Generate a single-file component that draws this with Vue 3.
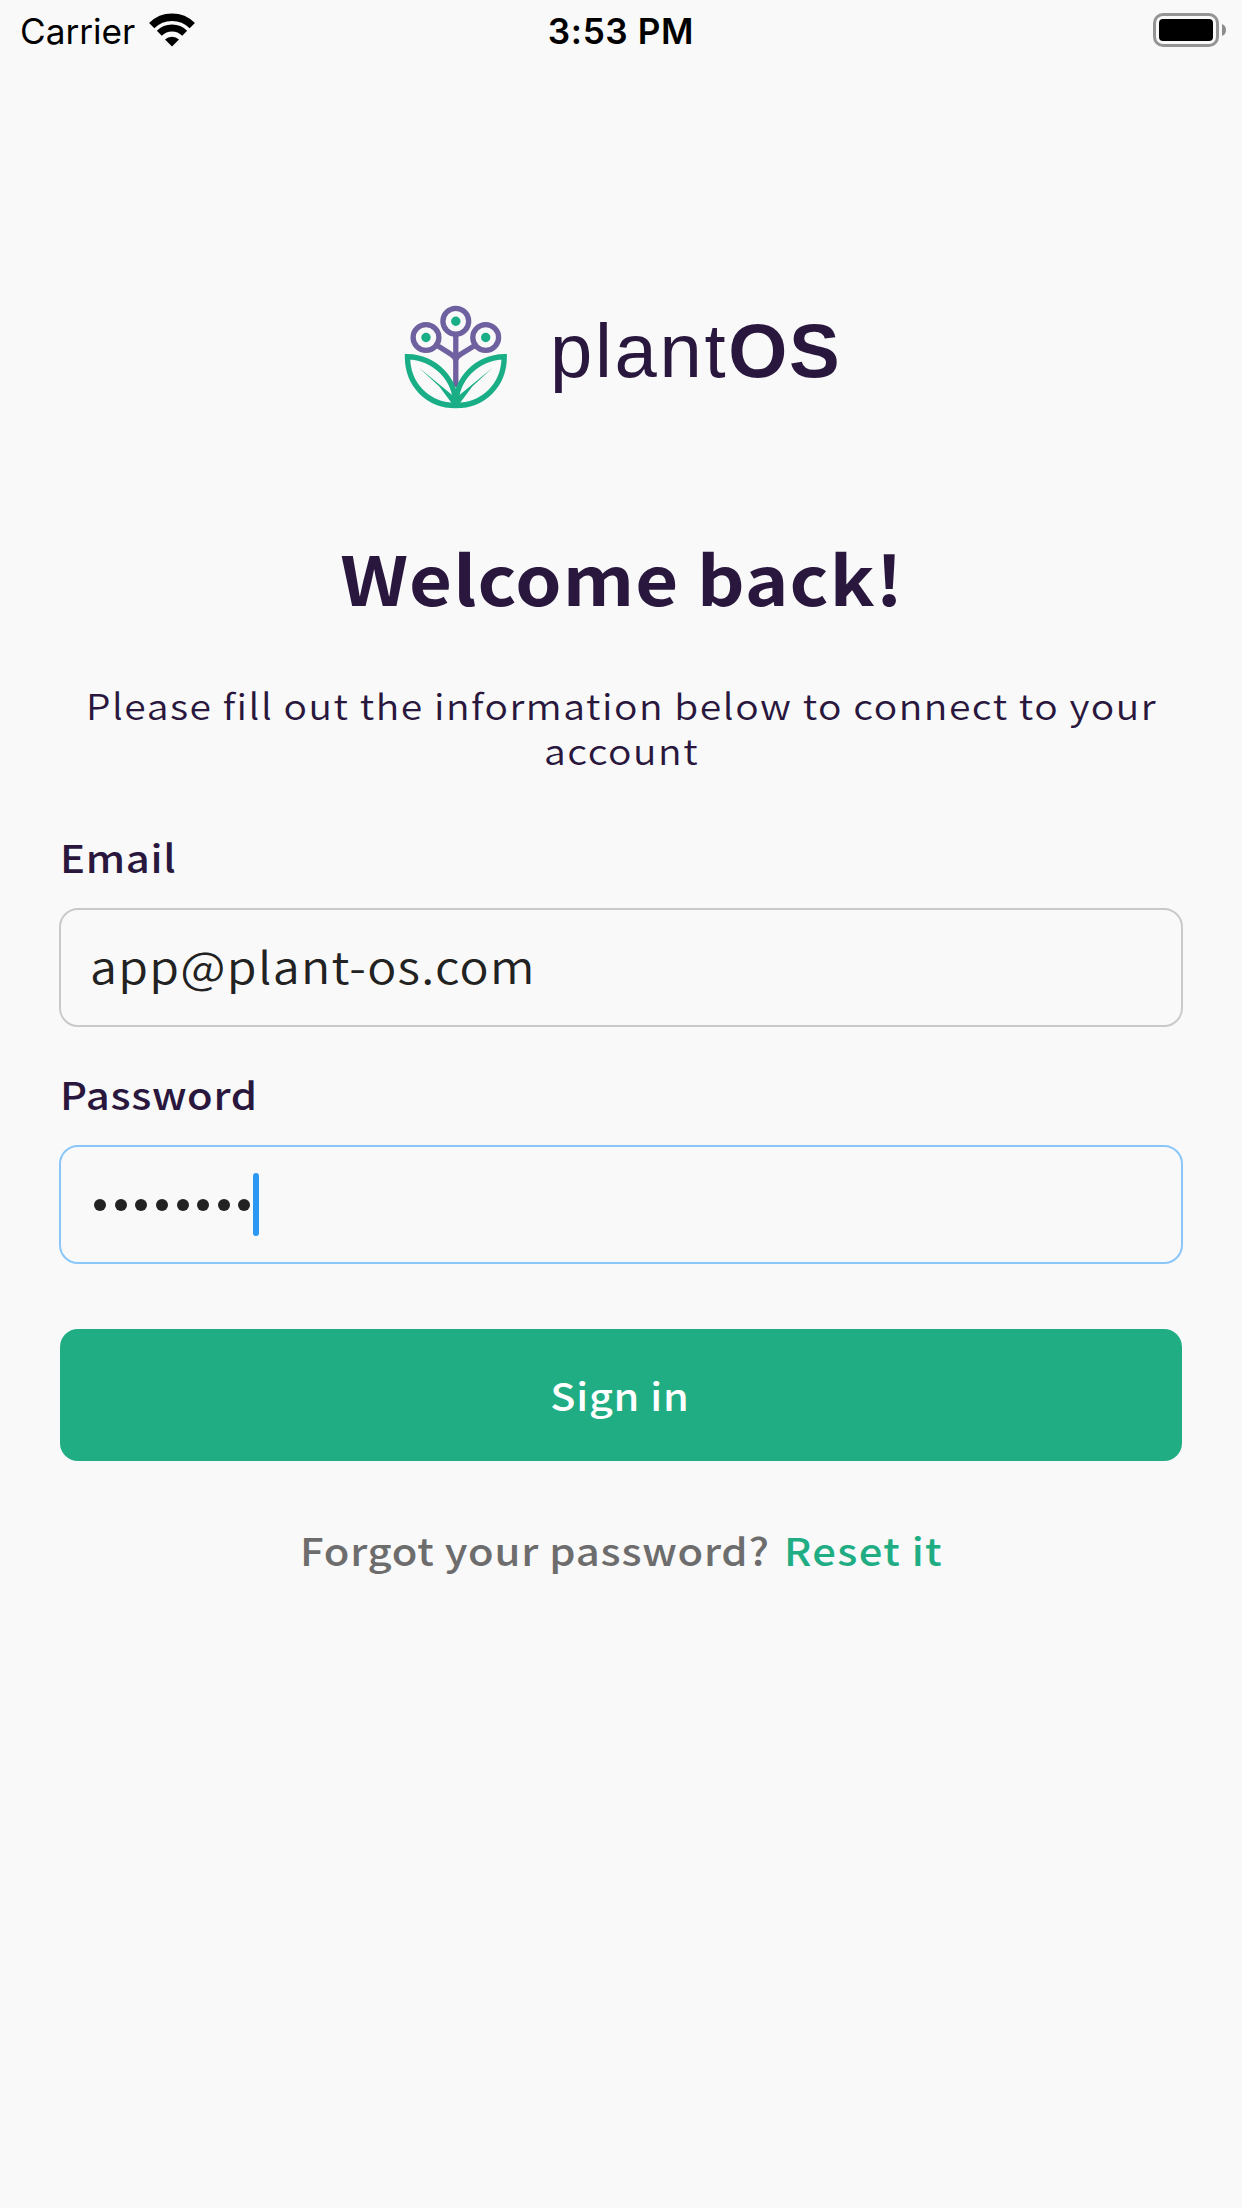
<script setup>
const dots = 8
</script>

<template>
  <main class="screen">
    <header class="status">
      <div class="carrier"><span>Carrier</span>
        <svg width="48" height="35" viewBox="0 0 48 35"><g fill="none" stroke="#000"><path d="M3.7 12.7a28.7 28.7 0 0 1 40.6 0" stroke-width="7.4"/><path d="M11.3 20.3a18 18 0 0 1 25.4 0" stroke-width="7"/></g><path d="M24 33.500l-7-7a10 10 0 0 1 14 0z"/></svg>
      </div>
      <time>3:53 PM</time>
      <div class="battery"><i class="case"><b></b></i>
        <svg width="4" height="12" viewBox="0 0 4 12"><path d="M0 0a6.5 6.5 0 0 1 0 12z" fill="#8c8c8c"/></svg>
      </div>
    </header>
    <div class="brand">
      <svg width="104" height="104" viewBox="9 10 104 104" fill="none">
        <g stroke="#6f60a0" stroke-width="5.300"><path d="M60.8 41v51M43 51l13 8.300q4.800 2.400 4.800 7 0-4.600 4.800-7L79 51"/><circle cx="60.800" cy="26.300" r="12.900"/><circle cx="31" cy="42.500" r="12.900"/><circle cx="90.700" cy="42.500" r="12.900"/></g>
        <g fill="#19ae85"><circle cx="60.800" cy="26.300" r="4.700"/><circle cx="31" cy="42.500" r="4.700"/><circle cx="90.700" cy="42.500" r="4.700"/><path d="M24 72.700 60.800 103 97.600 72.700 77.300 91.500 65 108H56.600L44.300 91.500z"/></g>
        <path d="M12.500 61.800C12.500 90 33 110.500 60.800 110.500 60.800 84 40 62.500 12.500 61.800zM109.200 61.800C109.200 90 88.600 110.500 60.800 110.500 60.800 84 81.600 62.500 109.200 61.800z" stroke="#19ae85" stroke-width="5.400"/>
      </svg>
      <div class="word">plant<strong>OS</strong></div>
    </div>
    <h1>Welcome back!</h1>
    <p class="intro">Please fill out the information below to connect to your<br>account</p>
    <label>Email</label>
    <div class="field"><span class="value">app@plant-os.com</span></div>
    <label>Password</label>
    <div class="field focus"><i v-for="n in dots" :key="n" class="dot"></i><i class="caret"></i></div>
    <button><span>Sign in</span></button>
    <p class="reset"><span>Forgot your password?</span><a>Reset it</a></p>
  </main>
</template>

<style>
body { margin: 0; background: #f9f9f9; }
</style>
<style scoped>
.screen { width: 1242px; height: 2208px; overflow: hidden; box-sizing: border-box; background: #f9f9f9; color: #29173d; font-family: "Noto Sans CJK SC", sans-serif; }
.status { display: grid; grid-template-columns: 1fr auto 1fr; height: 60px; align-items: center; color: #000; font: 35.200px/62px Inter, sans-serif; }
.carrier { display: flex; align-items: center; gap: 12.500px; padding-left: 20px; }
.carrier svg { margin-top: -2px; }
time { font-weight: 580; letter-spacing: .6px; }
.battery { display: flex; justify-content: flex-end; align-items: center; gap: 3px; padding: 0 16px 2px 0; }
.case { box-sizing: border-box; width: 66px; height: 34px; border: 3px solid #949494; border-radius: 10px; padding: 3px; }
.case b { display: block; height: 22px; background: #000; border-radius: 4px; }
.brand { display: flex; margin: 245px 0 0 404px; height: 104px; }
.word { margin-left: 42px; font: 76px/91px "Liberation Sans", Arial, sans-serif; letter-spacing: 2.700px; }
.word strong { letter-spacing: 1.500px; }
h1 { margin: 118px 0 0; padding-left: 2px; text-align: center; font-size: 68px; line-height: 100px; font-weight: 600; letter-spacing: .92px; transform: scaleX(1.09); }
.intro { margin: 55px 0 60px; padding-left: 1px; text-align: center; font-size: 35.500px; line-height: 45px; font-weight: 350; letter-spacing: 1.370px; white-space: nowrap; transform: scaleX(1.1); }
label { display: block; margin-left: 60px; font-size: 38px; line-height: 50px; font-weight: 500; letter-spacing: .6px; transform: scaleX(1.1); transform-origin: left; }
.field { box-sizing: border-box; margin: 26px 59px 42px; height: 119px; border: 2px solid #c9c9c9; border-radius: 19px; padding-left: 29px; display: flex; }
.value { font-size: 44px; line-height: 110px; font-weight: 350; color: #222; letter-spacing: 1.150px; transform: scaleX(1.1); transform-origin: left; }
.focus { border-color: #8bc6f8; padding-left: 33.300px; align-items: center; margin-bottom: 65px; }
.dot { width: 12px; height: 12px; margin-right: 8.600px; border-radius: 50%; background: #222; }
.caret { width: 6px; height: 63px; margin-left: -6.100px; border-radius: 3px; background: #2a99f5; }
button { display: block; width: 1122px; height: 132px; margin: 0 60px; padding: 0 3px 2px 0; border: 0; border-radius: 18px; background: #21ad83; color: #fff; font: 500 38px "Noto Sans CJK SC", sans-serif; letter-spacing: .7px; }
button span { display: inline-block; transform: scaleX(1.09); }
.reset { display: flex; gap: 57px; margin: 64px 0 0; padding-left: 300px; font-size: 38px; line-height: 50px; color: #6d6d6d; font-weight: 500; }
.reset span, .reset a { letter-spacing: .7px; transform: scaleX(1.1); transform-origin: left; }
.reset a { color: #21ad83; letter-spacing: 1.200px; }
</style>
